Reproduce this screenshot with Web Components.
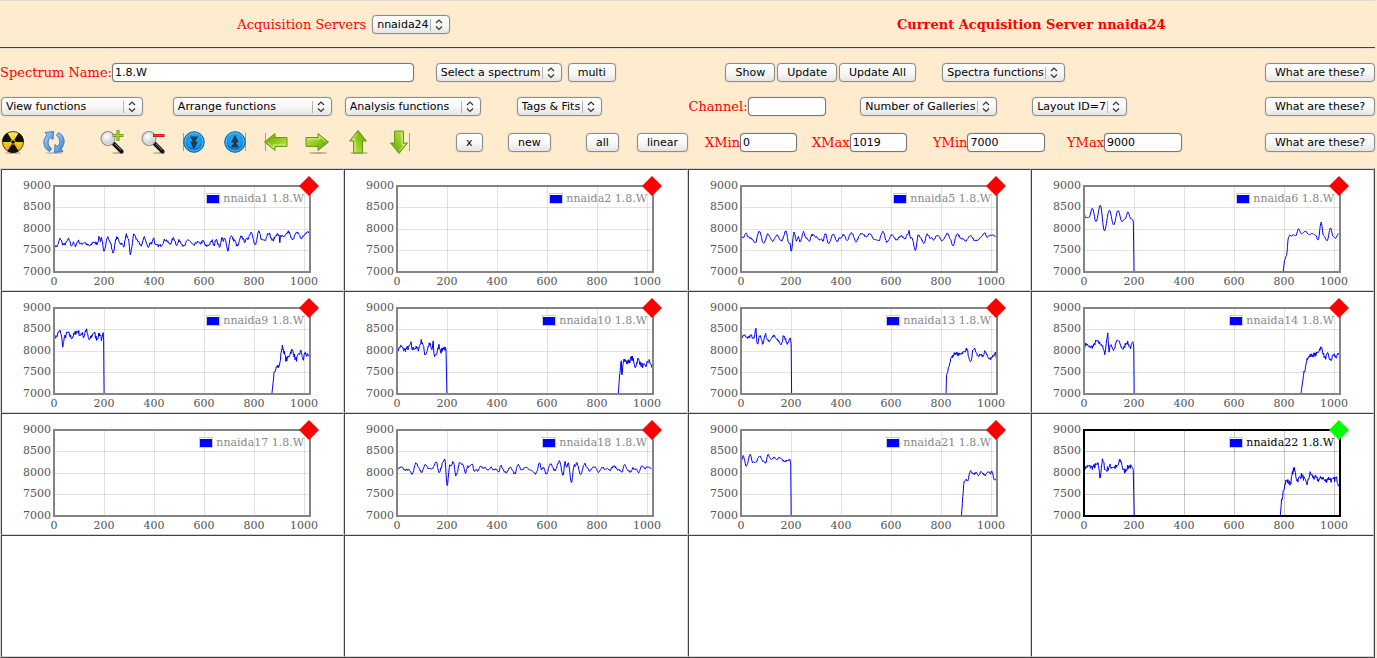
<!DOCTYPE html>
<html lang="en">
<head>
<meta charset="utf-8">
<title>Spectrum Browser</title>
<style>
html, body { margin: 0; background: #ffebcd; }
body { font: 13px "DejaVu Serif", serif; color: #f00; }
</style>
</head>
<body>
<spectrum-page></spectrum-page>

<script>
const define = (name, html, setup) => {
  const tpl = document.createElement('template');
  tpl.innerHTML = html;
  customElements.define(name, class extends HTMLElement {
    constructor() {
      super();
      this.attachShadow({ mode: 'open' }).append(tpl.content.cloneNode(true));
    }
    connectedCallback() { if (setup) setup(this, this.shadowRoot); }
  });
};

const controlCss = `
  font: 11px "DejaVu Sans", sans-serif; color: #000; box-sizing: border-box; height: 19px; margin: 0;
  border: 1px solid #8a8c8e; border-radius: 4px; box-shadow: 0 0 1px #8a8c8e;`;

define('ui-button', `
<style>
:host { display: inline-flex; }
button { ${controlCss} padding: 0 9px; white-space: nowrap; background: linear-gradient(#fff, #f8f8f7 50%, #e6e5e3); }
</style>
<button type="button"><slot></slot></button>`);

define('ui-select', `
<style>
:host { display: inline-grid; grid-template-columns: 1fr; width: var(--w, auto); vertical-align: middle; }
select { ${controlCss} grid-area: 1 / 1; width: 100%; padding: 0 20px 0 4px; appearance: none;
  background: linear-gradient(#fff, #f8f8f7 50%, #e6e5e3); }
svg { grid-area: 1 / 1; justify-self: end; align-self: center; pointer-events: none; }
</style>
<select><option></option></select>
<svg width="20" height="17" viewBox="0 0 20 17"><path d="M.5 3v12" stroke="#b4b4b2"/><path d="M6 7 9 4 12 7M6 10.500 9 13.500 12 10.500" fill="none" stroke="#333" stroke-width="1.200"/></svg>`,
(host, root) => {
  root.querySelector('option').textContent = host.getAttribute('value');
  root.querySelector('select').setAttribute('aria-label', host.getAttribute('label') || host.getAttribute('value'));
});

define('ui-field', `
<style>
:host { display: inline-flex; }
label { display: flex; align-items: center; white-space: nowrap; line-height: 19px; }
input { ${controlCss} width: var(--w, 78px); padding: 0 2px; background: #fff; border-color: #777; }
</style>
<label><slot></slot><input type="text"></label>`,
(host, root) => {
  const input = root.querySelector('input');
  input.value = host.getAttribute('value') || '';
  input.setAttribute('aria-label', host.textContent);
});

const greenArrow = (turn) => `
<defs><linearGradient id="g" x1="0" y1="0" x2="1" y2="1"><stop offset="0" stop-color="#d2e95c"/><stop offset=".55" stop-color="#8cc51d"/><stop offset="1" stop-color="#5d9a08"/></linearGradient></defs>
${turn === 180 ? '<path d="M1.500 3v18" stroke="#8a7d66" opacity=".7"/>' : turn === 90 ? '<path d="M22.500 3v18" stroke="#8a7d66" opacity=".7"/>' : '<ellipse cx="13" cy="23" rx="9" ry="1" fill="#8a7d66" opacity=".6"/>'}
<g transform="rotate(${turn} 12 12)"><path d="M1 7.500h12V3.500L23.500 12 13 20.500v-4H1z" fill="url(#g)" stroke="#659c16"/><path d="M2.500 9H14.500V6.500l6 5" fill="none" stroke="#e5f49a" opacity=".8"/></g>`;
const blueDisc = (turn) => `
<defs><radialGradient id="g" cy=".4"><stop offset="0" stop-color="#25b4ff"/><stop offset=".7" stop-color="#1597ec"/><stop offset="1" stop-color="#0a6fbd"/></radialGradient></defs>
<path d="${turn ? 'M22.500 3v18' : 'M1.500 3v18'}" stroke="#a89c88"/>
<circle cx="12" cy="12" r="10.300" fill="url(#g)" stroke="#1869a5"/><circle cx="12" cy="12" r="9" fill="none" stroke="#58c5ff"/>
<g transform="rotate(${turn} 12 12)" fill="#24394a"><path d="M8 6.500h8L13 12h-2z"/><path d="M8 11.500h8L12.500 18.500h-1z"/></g>`;
const magnifier = (sign) => `
<defs><radialGradient id="g" cx=".4" cy=".35"><stop offset="0" stop-color="#fff"/><stop offset="1" stop-color="#cfd2d6"/></radialGradient></defs>
<ellipse cx="18" cy="23" rx="6" ry="1" fill="#8a7d66" opacity=".5"/>
<path d="M13.500 13.500 21.500 21.500" stroke="#161616" stroke-width="4" stroke-linecap="round"/><path d="M15 14 21 20" stroke="#858585"/>
<circle cx="8" cy="8.500" r="6.700" fill="url(#g)" stroke="#8a8a8a" stroke-width="1.600"/><circle cx="8" cy="8.500" r="6" fill="none" stroke="#e4e4e4"/>${sign}`;
const icons = {
  radiation: `<ellipse cx="12" cy="23" rx="8" ry="1" fill="#8a7d66" opacity=".5"/>
<defs><linearGradient id="g" x2="0" y2="1"><stop offset="0" stop-color="#ffe75c"/><stop offset="1" stop-color="#eda500"/></linearGradient></defs>
<circle cx="12" cy="12" r="10.500" fill="url(#g)" stroke="#4e4520"/>
<path d="M10.700 9.800 6.300 2.700A11 11 0 0 0 1.200 12H9.500A2.500 2.500 0 0 1 10.700 9.800M13.300 9.800 17.700 2.700A11 11 0 0 1 22.800 12H14.500A2.500 2.500 0 0 0 13.300 9.800M10.700 14.200 6.300 21.300A11 11 0 0 0 17.700 21.300L13.300 14.200A2.500 2.500 0 0 1 10.700 14.200" fill="#111"/><circle cx="12" cy="12" r="1.800" fill="#111"/>`,
  refresh: `<defs><linearGradient id="g" x2="1" y2="1"><stop offset="0" stop-color="#b8dcfa"/><stop offset="1" stop-color="#2b78c8"/></linearGradient></defs>
<ellipse cx="12" cy="23" rx="9" ry="1" fill="#8a7d66" opacity=".4"/>
<g fill="url(#g)" stroke="#3b7fc4"><path d="M3 2.500 11.500 1.500 11 9.500 8.500 7.500C5 11 5.500 15.500 9.500 18.500L7.500 21.500C1 18 0 10.500 5 5z"/><path d="M21 21.500 12.500 22.500 13 14.500 15.500 16.500C19 13 18.500 8.500 14.500 5.500L16.500 2.500C23 6 24 13.500 19 19z"/></g>`,
  zoomin: magnifier('<path d="M18 0v11M12.500 5.500h11" stroke="#609512" stroke-width="3"/><path d="M18 .5v10M13 5.500h10" stroke="#a6d834" stroke-width="1.400"/>'),
  zoomout: magnifier('<path d="M12 5.500h11.500" stroke="#c01414" stroke-width="3"/><path d="M12.500 5.500h10.500" stroke="#f23b38" stroke-width="1.500"/>'),
  down2: blueDisc(0), up2: blueDisc(180),
  left: greenArrow(180), right: greenArrow(0), up: greenArrow(-90), down: greenArrow(90)
};

define('tool-icon', `
<style>
:host { display: inline-flex; }
button { border: 0; padding: 0; margin: 0; background: none; width: 24px; height: 25px; }
svg { display: block; }
</style>
<button type="button"></button>`,
(host, root) => {
  const name = host.getAttribute('name'), b = root.querySelector('button');
  b.setAttribute('aria-label', name);
  b.innerHTML = `<svg width="24" height="25" viewBox="0 0 24 25">${icons[name]}</svg>`;
});

/* Each series: cal = [x at channel 0, x at channel 1000, y at 9000, y at 7000],
   noise = jitter in counts, pts = turning points of the trace; "|" breaks the line. */
const A = [163, 911, 61, 320], W9 = [123, 691, 52, 311], W14 = [902, 1469, 52, 311];
const series = {
  nnaida1: { cal: A, noise: 34, pts: '163,240 172,243 182,220 190,237 196,236 207,222 216,240 221,233 227,241 235,226 243,236 255,230 263,239 272,242 280,230 292,234 299,215 303,228 305,216 313,261 323,213 331,230 340,260 351,217 364,234 372,241 380,208 386,225 392,266 403,206 411,222 423,241 434,217 446,246 453,229 456,234 461,216 468,241 482,240 497,223 510,235 522,219 531,238 539,225 553,243 565,223 582,240 592,230 600,234 611,227 618,242 627,238 638,226 642,240 648,222 659,243 667,217 671,226 675,220 684,254 693,211 703,224 713,242 725,213 735,228 743,220 755,199 766,240 777,200 787,223 796,222 806,202 818,225 832,206 838,212 840,230 842,210 853,215 866,199 876,220 894,201 904,219 912,210 924,199 928,200' },
  nnaida2: { pts: '' },
  nnaida5: { cal: [160, 908, 61, 320], noise: 20, pts: '160,211 167,217 175,203 181,214 190,219 203,233 214,197 228,233 241,206 255,227 268,210 281,226 295,197 304,236 307,235 310,259 319,200 326,226 332,215 338,229 347,200 355,216 364,227 373,208 386,215 397,224 402,220 405,227 413,206 423,235 436,206 449,228 455,216 460,220 467,208 478,223 491,202 505,228 520,203 534,212 546,206 560,222 573,227 585,199 598,230 613,208 626,224 638,211 652,219 660,206 664,197 668,220 672,216 683,254 692,207 697,216 709,235 718,206 727,217 738,222 748,208 764,227 779,203 787,218 795,240 808,206 820,218 834,226 848,212 863,227 877,218 891,202 897,215 906,210 916,209 924,211' },
  nnaida6: { cal: A, noise: 6, pts: '163,143 168,156 178,156 188,128 199,169 212,119 224,196 239,134 252,178 265,135 277,168 286,160 295,139 303,159 309,163 311,170 313,320 | 760,320 764,286 770,270 776,216 780,209 785,212 790,208 798,211 806,190 815,205 827,197 837,208 847,204 858,210 865,224 874,170 881,210 892,226 902,187 910,213 917,219 926,205' },
  nnaida9: { cal: W9, noise: 60, pts: '123,137 128,139 135,124 138,124 143,163 148,138 154,128 163,140 176,122 185,135 188,124 190,140 196,119 203,148 214,127 220,143 228,130 232,148 235,132 236,150 237,311 | 619,311 624,250 630,222 635,229 643,170 652,207 665,180 674,206 686,184 690,210 694,188 702,198' },
  nnaida10: { cal: [904, 1469, 52, 311], noise: 60, pts: '904,180 913,168 920,178 930,172 936,160 937,176 945,172 951,176 960,152 968,190 978,162 983,178 986,158 988,195 994,190 999,166 1004,182 1010,170 1015,178 1017,311 | 1405,311 1408,260 1412,215 1413,250 1417,207 1425,216 1437,203 1443,228 1450,207 1458,224 1466,228 1474,212 1482,229' },
  nnaida13: { cal: [121, 688, 52, 311], noise: 38, pts: '121,142 128,134 134,142 144,136 150,146 155,117 158,163 163,135 171,158 176,131 183,152 195,137 206,151 213,163 218,134 226,158 233,146 235,160 236,311 | 587,311 588,260 590,245 593,225 600,200 608,188 616,192 627,185 634,176 642,218 650,174 660,196 672,195 676,183 685,205 697,194 698,184 702,208' },
  nnaida14: { cal: W14, noise: 48, pts: '902,175 906,160 914,170 922,168 930,153 941,160 949,187 956,132 959,183 963,160 969,178 978,150 991,175 999,155 1008,170 1013,158 1015,170 1016,311 | 1395,311 1402,245 1409,205 1417,195 1428,192 1441,172 1450,202 1456,192 1462,210 1470,192 1474,200 1482,192' },
  nnaida17: { pts: '' },
  nnaida18: { cal: [158, 905, 58, 317], noise: 22, pts: '158,174 173,170 180,178 193,178 203,191 214,159 233,185 242,161 254,175 263,176 275,154 284,185 292,170 293,156 301,148 308,224 316,163 320,167 326,153 335,196 346,157 354,160 363,186 370,168 376,170 382,160 390,182 396,177 400,183 405,170 420,172 432,178 440,170 447,178 453,175 462,186 469,166 484,186 498,171 511,190 520,161 529,176 545,172 556,178 573,191 585,158 590,176 597,172 605,192 617,160 630,179 645,152 655,196 661,155 666,172 671,157 680,215 689,164 692,168 696,157 708,194 719,160 734,180 748,167 762,186 774,170 780,177 787,172 795,178 807,167 820,177 832,184 839,163 848,179 859,185 864,173 874,176 880,187 892,166 900,174 907,170 920,172' },
  nnaida21: { cal: [121, 688, 58, 317], noise: 20, pts: '121,155 126,136 133,168 142,132 147,155 154,157 163,136 170,150 177,157 182,133 190,146 196,141 203,148 208,141 220,152 232,148 234,160 235,317 | 622,317 625,260 628,212 632,206 636,212 642,182 650,191 655,187 661,194 666,184 676,194 684,184 688,190 691,182 697,209 702,203' },
  nnaida22: { active: true, cal: [902, 1469, 58, 317], noise: 65, pts: '902,172 912,168 920,170 932,164 935,163 938,200 944,152 952,180 960,168 976,170 985,151 993,182 1001,172 1005,165 1014,180 1016,317 | 1348,317 1351,270 1356,230 1362,211 1370,218 1379,177 1387,208 1396,195 1409,219 1416,190 1425,202 1437,208 1443,200 1450,212 1458,203 1466,210 1475,204 1482,222' }
};

const X0 = 52, Y0 = 16, PW = 256, PH = 86;
const px = ch => X0 + ch * 0.2495;
const py = v => Y0 + (9000 - v) * PH / 2000;

function tracePath({ cal, pts, noise }) {
  if (!pts) return '';
  let seed = 7;
  const rnd = () => (seed = (seed * 16807) % 2147483647) / 2147483647 - .5;
  return pts.split('|').map(run => {
    const p = run.trim().split(' ').map(s => s.split(',').map(Number)).map(([x, y]) =>
      [(x - cal[0]) * 1000 / (cal[1] - cal[0]), 9000 - (y - cal[2]) * 2000 / (cal[3] - cal[2])]);
    const out = [];
    for (let i = 0; i < p.length - 1; i++) {
      const [a, b] = [p[i], p[i + 1]], n = Math.max(1, Math.round((b[0] - a[0]) / 2));
      const steep = Math.abs(b[1] - a[1]) > 700 || a[1] < 7200;
      for (let k = 0; k < n; k++) {
        const t = k / n, e = (1 - Math.cos(Math.PI * t)) / 2;
        out.push([a[0] + (b[0] - a[0]) * t, a[1] + (b[1] - a[1]) * (steep ? t : e) + (steep ? 0 : rnd() * 2 * noise)]);
      }
    }
    out.push(p[p.length - 1]);
    return 'M' + out.map(([c, v]) => px(c).toFixed(2) + ' ' + py(Math.max(v, 7000)).toFixed(2)).join('L');
  }).join('');
}

define('spectrum-chart', `
<style>
:host { display: block; }
svg { display: block; width: 100%; height: 120px; font: 11px "DejaVu Serif", serif; }
.grid { stroke: #545454; stroke-opacity: .17; }
:host([active]) .grid { stroke-opacity: .32; }
.tick { fill: #545454; }
.frame { fill: none; stroke: #848484; stroke-width: 2; }
.name { fill: #888; }
:host([active]) .frame { stroke: #000; }
:host([active]) .name { fill: #000; }
.mark { fill: #f00; }
:host([active]) .mark { fill: #0f0; }
.trace { fill: none; stroke: #00f; stroke-linejoin: round; }
</style>
<svg viewBox="0 0 330 120" preserveAspectRatio="xMinYMin meet" role="img"></svg>`,
(host, root) => {
  const name = host.getAttribute('name'), s = series[name], svg = root.querySelector('svg');
  svg.setAttribute('aria-label', name);
  let h = '';
  for (let v = 9000; v >= 7000; v -= 500) {
    const y = Math.floor(py(v));
    if (v < 9000 && v > 7000) h += `<path class="grid" d="M${X0} ${y + .5}H${X0 + PW}"/>`;
    h += `<text class="tick" x="49" y="${y + 3}" text-anchor="end">${v}</text>`;
  }
  for (let c = 0; c <= 1000; c += 200) {
    const x = Math.round(px(c));
    if (c) h += `<path class="grid" d="M${x + .5} ${Y0}V${Y0 + PH}"/>`;
    h += `<text class="tick" x="${x}" y="115" text-anchor="middle">${c}</text>`;
  }
  h += `<path class="trace" d="${tracePath(s)}"/>
    <rect class="frame" x="${X0}" y="${Y0}" width="${PW}" height="${PH}"/>
    <text class="name" x="302" y="32" text-anchor="end">${name} 1.8.W</text>
    <g class="key"><rect x=".5" y="23.500" width="13" height="10" fill="#fff" stroke="#ccc"/><rect x="1" y="25" width="12" height="8" fill="#00f"/></g>
    <path class="mark" d="M307 6l10 10-10 10-10-10z"/>`;
  svg.innerHTML = h;
  const w = Math.round(svg.querySelector('.name').getComputedTextLength());
  svg.querySelector('.key').setAttribute('transform', `translate(${302 - w - 17} 0)`);
});

define('spectrum-gallery', `
<style>
:host { display: grid; grid-template-columns: repeat(4, minmax(0, 1fr)); background: #fff;
  border: 1px solid; border-color: #d3d3d3 #424242 #424242 #d3d3d3; }
div { box-sizing: border-box; min-height: 122px; border: 1px solid; border-color: #424242 #d3d3d3 #d3d3d3 #424242; }
</style>`,
(host, root) => {
  const names = Object.keys(series);
  for (let i = 0; i < 16; i++) {
    const cell = document.createElement('div');
    if (names[i]) {
      const chart = document.createElement('spectrum-chart');
      chart.setAttribute('name', names[i]);
      if (series[names[i]].active) chart.setAttribute('active', '');
      cell.append(chart);
    }
    root.append(cell);
  }
});

define('server-header', `
<style>
:host { display: grid; grid-template-columns: 1fr 1fr; align-items: center; justify-items: center; height: 46px;
  border-top: 1px solid #d9d9d9; border-bottom: 1px solid #424242; box-shadow: 0 1px #dedede; margin-bottom: 1px; }
div { display: flex; align-items: center; gap: 6px; }
b { font-size: 13px; }
</style>
<div><span>Acquisition Servers</span><ui-select value="nnaida24" label="Acquisition Servers"></ui-select></div>
<b>Current Acquisition Server nnaida24</b>`);

define('spectrum-toolbar', `
<style>
:host { display: block; padding: 6px 0 7px; }
.row { display: grid; align-items: center; height: 34px; }
.row > * { justify-self: start; }
.group { display: flex; align-items: center; }
.r1 { grid-template-columns: 436fr 290fr 217fr 433fr; }
.r2 { grid-template-columns: repeat(6, 172fr) 343fr; padding-left: 1px; }
.r3 { grid-template-columns: 99fr 357fr 52fr 78fr 51fr 68fr 107fr 121fr 134fr 308fr; height: 38px; }
.icons { gap: 17px; padding-left: 1px; }
.row > .end { display: flex; justify-content: space-between; justify-self: stretch; }
</style>
<div class="row r1">
  <ui-field style="--w: 302px" value="1.8.W">Spectrum Name:</ui-field>
  <div class="group" style="gap: 6px"><ui-select value="Select a spectrum"></ui-select><ui-button>multi</ui-button></div>
  <div class="group" style="gap: 2px"><ui-button>Show</ui-button><ui-button>Update</ui-button><ui-button>Update All</ui-button></div>
  <div class="end"><ui-select value="Spectra functions"></ui-select><ui-button>What are these?</ui-button></div>
</div>
<div class="row r2">
  <ui-select style="--w: 142px" value="View functions"></ui-select>
  <ui-select style="--w: 159px" value="Arrange functions"></ui-select>
  <ui-select style="--w: 136px" value="Analysis functions"></ui-select>
  <ui-select value="Tags &amp; Fits"></ui-select>
  <ui-field>Channel:</ui-field>
  <ui-select value="Number of Galleries"></ui-select>
  <div class="end"><ui-select value="Layout ID=7"></ui-select><ui-button>What are these?</ui-button></div>
</div>
<div class="row r3">
  <div class="group icons"><tool-icon name="radiation"></tool-icon><tool-icon name="refresh"></tool-icon></div>
  <div class="group icons"><tool-icon name="zoomin"></tool-icon><tool-icon name="zoomout"></tool-icon><tool-icon name="down2"></tool-icon><tool-icon name="up2"></tool-icon><tool-icon name="left"></tool-icon><tool-icon name="right"></tool-icon><tool-icon name="up"></tool-icon><tool-icon name="down"></tool-icon></div>
  <ui-button>x</ui-button>
  <ui-button>new</ui-button>
  <ui-button>all</ui-button>
  <ui-button>linear</ui-button>
  <ui-field style="--w: 57px" value="0">XMin</ui-field>
  <ui-field style="--w: 57px" value="1019">XMax</ui-field>
  <ui-field value="7000">YMin</ui-field>
  <div class="end"><ui-field value="9000">YMax</ui-field><ui-button>What are these?</ui-button></div>
</div>`);

define('spectrum-page', `
<style>:host { display: block; margin-right: 2px; }</style>
<server-header></server-header>
<spectrum-toolbar></spectrum-toolbar>
<spectrum-gallery></spectrum-gallery>`);
</script>
</body>
</html>
